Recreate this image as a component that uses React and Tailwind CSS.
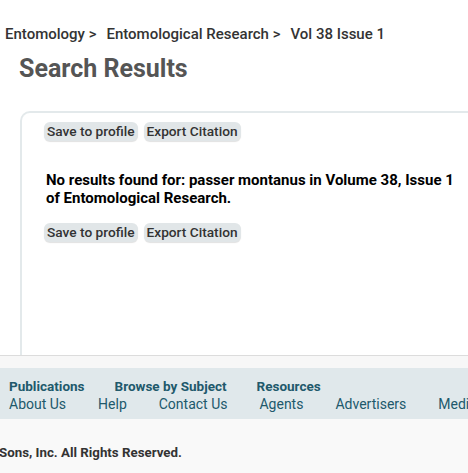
export default function App() {
  const btn = "rounded-[6px] bg-[#e1e6e8] px-[3px] py-[1px] text-[13.7px] font-medium leading-[17px] text-[#333] shadow-[0_1px_1px_rgba(0,0,0,0.12)]";
  return (
    <div className="w-[468px] h-[473px] overflow-hidden bg-white font-['Roboto',sans-serif]">
      <div className="pt-[25px] pl-[5px] text-[15px] font-medium leading-[18px] text-[#333] whitespace-nowrap flex gap-[10px]">
        <span>Entomology &gt;</span>
        <span>Entomological Research &gt;</span>
        <span>Vol 38 Issue 1</span>
      </div>
      <h1 className="pl-[19px] mt-[10px] text-[25px] font-bold leading-[32px] text-[#555]">Search Results</h1>
      <div className="mt-[26px] ml-[20px] h-[244px] w-[460px] rounded-tl-[10px] border-l-2 border-t-2 border-[#e3e9eb] pl-[22px] pt-[9px]">
        <div className="flex gap-[6px]">
          <span className={btn}>Save to profile</span>
          <span className={btn}>Export Citation</span>
        </div>
        <p className="mt-[30px] w-[420px] pl-[2px] text-[15px] font-bold leading-[18px] text-black">
          No results found for: passer montanus in Volume 38, Issue 1 of Entomological Research.
        </p>
        <div className="mt-[16px] flex gap-[6px]">
          <span className={btn}>Save to profile</span>
          <span className={btn}>Export Citation</span>
        </div>
      </div>
      <div className="h-[13px] border-t border-[#dcdcdc] bg-[#f7f7f7]"></div>
      <div className="h-[51px] bg-[#e0e8eb] pl-[9px] pt-[10px] whitespace-nowrap text-[#21596b]">
        <div className="flex gap-[30px] text-[13.5px] font-bold leading-[17px]">
          <span>Publications</span>
          <span>Browse by Subject</span>
          <span>Resources</span>
        </div>
        <div className="flex gap-[32px] text-[14px] leading-[18px]">
          <span>About Us</span>
          <span>Help</span>
          <span>Contact Us</span>
          <span>Agents</span>
          <span>Advertisers</span>
          <span>Media</span>
        </div>
      </div>
      <div className="h-[54px] bg-[#f9f9f9] pt-[25px] -ml-[1px] text-[13.3px] font-bold leading-[17px] text-[#333] whitespace-nowrap">
        Sons, Inc. All Rights Reserved.
      </div>
    </div>
  );
}
